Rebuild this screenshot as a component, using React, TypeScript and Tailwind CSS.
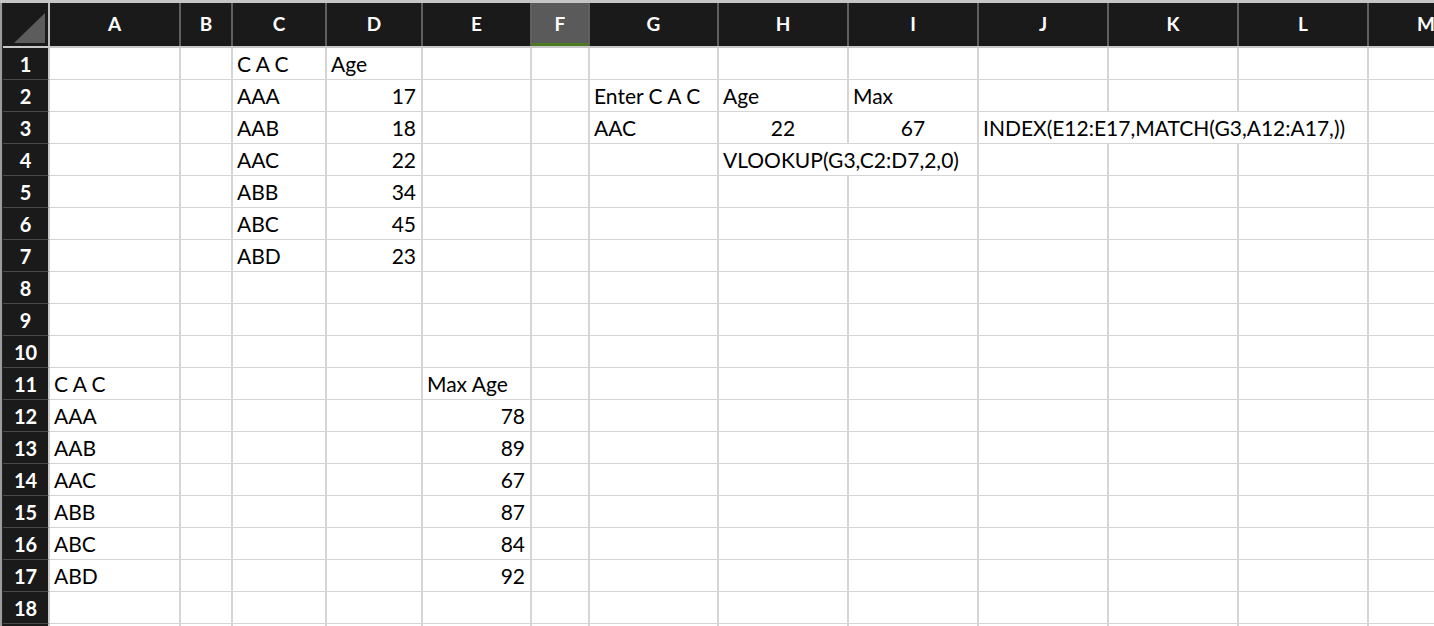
import React from 'react';

type Align = 'left' | 'right' | 'center';

interface Cell {
  col: number; // 0 = A
  text: string;
  align?: Align;
  span?: number;
}

const COLUMNS = ['A', 'B', 'C', 'D', 'E', 'F', 'G', 'H', 'I', 'J', 'K', 'L', 'M'];

// row number -> cells in that row
const DATA: Record<number, Cell[]> = {
  1: [
    { col: 2, text: 'C A C' },
    { col: 3, text: 'Age' },
  ],
  2: [
    { col: 2, text: 'AAA' },
    { col: 3, text: '17', align: 'right' },
    { col: 6, text: 'Enter C A C' },
    { col: 7, text: 'Age' },
    { col: 8, text: 'Max' },
  ],
  3: [
    { col: 2, text: 'AAB' },
    { col: 3, text: '18', align: 'right' },
    { col: 6, text: 'AAC' },
    { col: 7, text: '22', align: 'center' },
    { col: 8, text: '67', align: 'center' },
    { col: 9, text: 'INDEX(E12:E17,MATCH(G3,A12:A17,))', span: 3 },
  ],
  4: [
    { col: 2, text: 'AAC' },
    { col: 3, text: '22', align: 'right' },
    { col: 7, text: 'VLOOKUP(G3,C2:D7,2,0)', span: 2 },
  ],
  5: [
    { col: 2, text: 'ABB' },
    { col: 3, text: '34', align: 'right' },
  ],
  6: [
    { col: 2, text: 'ABC' },
    { col: 3, text: '45', align: 'right' },
  ],
  7: [
    { col: 2, text: 'ABD' },
    { col: 3, text: '23', align: 'right' },
  ],
  11: [
    { col: 0, text: 'C A C' },
    { col: 4, text: 'Max Age' },
  ],
  12: [
    { col: 0, text: 'AAA' },
    { col: 4, text: '78', align: 'right' },
  ],
  13: [
    { col: 0, text: 'AAB' },
    { col: 4, text: '89', align: 'right' },
  ],
  14: [
    { col: 0, text: 'AAC' },
    { col: 4, text: '67', align: 'right' },
  ],
  15: [
    { col: 0, text: 'ABB' },
    { col: 4, text: '87', align: 'right' },
  ],
  16: [
    { col: 0, text: 'ABC' },
    { col: 4, text: '84', align: 'right' },
  ],
  17: [
    { col: 0, text: 'ABD' },
    { col: 4, text: '92', align: 'right' },
  ],
};

const gridCols =
  'grid grid-cols-[47px_131px_52px_94px_96px_109px_58px_129px_130px_130px_130px_130px_130px_116px]';

const spanClass: Record<number, string> = {
  1: '',
  2: 'col-span-2',
  3: 'col-span-3',
};

const alignClass: Record<Align, string> = {
  left: 'justify-start pl-[4px]',
  right: 'justify-end pr-[5px]',
  center: 'justify-center',
};

const HeaderRow = () => (
  <div className={`${gridCols} h-[45px] border-b-2 border-[#c9c9c9] bg-[#1a1a1a]`}>
    {/* corner */}
    <div className="relative border-r-2 border-[#bdbdbd]">
      <svg className="absolute left-[11px] top-[10px]" width="31" height="30" viewBox="0 0 31 30">
        <polygon points="31,0 31,30 0,30" fill="#5c5c5c" />
      </svg>
    </div>
    {COLUMNS.map((c) => (
      <div
        key={c}
        className={`flex items-center justify-center border-r-2 border-[#5f5f5f] text-[19px] font-bold text-white ${
          c === 'F' ? 'bg-[#5a5a5a] shadow-[inset_0_-3px_0_#4b7a21]' : ''
        }`}
      >
        {c}
      </div>
    ))}
  </div>
);

const SheetRow = ({ n, label = true }: { n: number; label?: boolean }) => {
  const cells = DATA[n] ?? [];
  const out: React.ReactNode[] = [];
  let col = 0;
  while (col < COLUMNS.length) {
    const cell = cells.find((x) => x.col === col);
    const span = cell?.span ?? 1;
    out.push(
      <div
        key={col}
        className={`flex items-end overflow-visible whitespace-nowrap border-r-2 border-b-2 border-[#d5d5d5] bg-white pb-[3px] text-[21px] leading-[24px] text-black ${
          spanClass[span]
        } ${alignClass[cell?.align ?? 'left']}`}
      >
        {cell?.text}
      </div>
    );
    col += span;
  }

  return (
    <div className={`${gridCols} h-[32px]`}>
      <div className="flex items-center justify-center border-r-2 border-b-2 border-r-[#c9c9c9] border-b-[#4a4a4a] bg-[#1a1a1a] pt-[1px] text-[20px] font-bold text-white">
        {label ? n : null}
      </div>
      {out}
    </div>
  );
};

export default function App() {
  const rows = Array.from({ length: 18 }, (_, i) => i + 1);
  return (
    <div
      className="h-[626px] w-[1434px] overflow-hidden bg-[#c6c6c6] pt-[3px]"
      style={{ fontFamily: 'Lato, "Open Sans", sans-serif' }}
    >
      <div className="flex h-full">
        <div className="w-[2px] bg-[#9c9c9c]" />
        <div className="flex-1 overflow-hidden border-l border-[#222]">
          <HeaderRow />
          {rows.map((n) => (
            <SheetRow key={n} n={n} />
          ))}
          {/* next row peeking in at the bottom edge */}
          <SheetRow n={19} label={false} />
        </div>
      </div>
    </div>
  );
}
